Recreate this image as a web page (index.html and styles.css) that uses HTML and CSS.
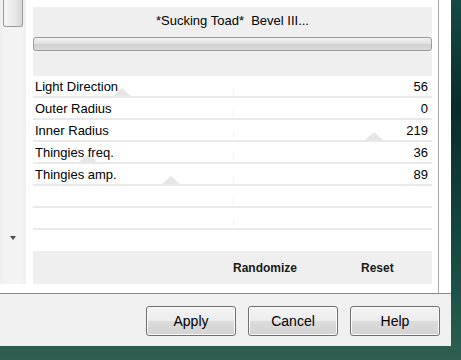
FILE: index.html
```html
<!doctype html>
<html lang="en">
    <head>
        <meta charset="UTF-8" />
        <title>Sucking Toad Bevel III</title>
        <link rel="stylesheet" href="styles.css">
    </head>
    <body>
        <div class="window">
            <div class="top">
                <div class="sidebar">
                    <div class="scroll-track">
                        <div class="scroll-thumb"></div>
                        <div class="scroll-arrow"></div>
                    </div>
                </div>

                <div class="pane">
                    <div class="main">
                        <div class="header">
                            <div class="title">*Sucking Toad*&nbsp; Bevel III...</div>
                            <div class="progress"></div>
                        </div>

                        <div class="params">
                            <div class="row">
                                <span class="thumb" style="left: 80px"></span>
                                <span class="label">Light Direction</span>
                                <span class="value">56</span>
                            </div>
                            <div class="row">
                                <span class="label">Outer Radius</span>
                                <span class="value">0</span>
                            </div>
                            <div class="row">
                                <span class="thumb" style="left: 332px"></span>
                                <span class="label">Inner Radius</span>
                                <span class="value">219</span>
                            </div>
                            <div class="row">
                                <span class="thumb" style="left: 46px"></span>
                                <span class="label">Thingies freq.</span>
                                <span class="value">36</span>
                            </div>
                            <div class="row">
                                <span class="thumb" style="left: 129px"></span>
                                <span class="label">Thingies amp.</span>
                                <span class="value">89</span>
                            </div>
                            <div class="row"></div>
                            <div class="row"></div>
                        </div>

                        <div class="actions">
                            <span class="action randomize">Randomize</span>
                            <span class="action reset">Reset</span>
                        </div>
                    </div>
                </div>
            </div>

            <div class="buttons">
                <button class="btn">Apply</button>
                <button class="btn">Cancel</button>
                <button class="btn">Help</button>
            </div>
        </div>
    </body>
</html>
```

FILE: styles.css
```css
:root {
    --panel-color: #efefef;
    --line-color: #e9e9e9;
    --text-color: #000000;
    --teal-dark: #0c3530;
    --teal-light: #2c5e52;
}

body {
    margin: 0;
    width: 461px;
    height: 360px;
    overflow: hidden;
    font-family: "Liberation Sans", Arial, sans-serif;
    color: var(--text-color);
    background:
        linear-gradient(180deg, #164a42 0%, #0a2c28 30%, #164a40 70%, #2e5f52 100%);
}

.window {
    width: 451px;
    background-color: #ffffff;
}

.top {
    display: flex;
    height: 293px;
    border-bottom: 1px solid #8a8a8a;
}

/* left scroll column */
.sidebar {
    width: 26px;
    height: 284px;
    background-color: #f0f0f0;
    flex-shrink: 0;
}

.scroll-track {
    position: relative;
    margin-left: 3px;
    width: 20px;
    height: 284px;
    background-color: #f3f3f3;
}

.scroll-thumb {
    height: 27px;
    box-sizing: border-box;
    border: 1px solid #9a9a9a;
    border-top: none;
    border-radius: 0 0 3px 3px;
    background: linear-gradient(90deg, #f6f6f6 0%, #e8e8e8 60%, #d6d6d6 100%);
}

.scroll-arrow {
    position: absolute;
    left: 7px;
    top: 236px;
    width: 0;
    height: 0;
    border-left: 3px solid transparent;
    border-right: 3px solid transparent;
    border-top: 4px solid #4a4a4a;
}

.pane {
    margin-left: 7px;
    width: 405px;
    border-right: 1px solid #a8a8a8;
}

.main {
    width: 399px;
}

/* title and progress */
.header {
    margin-top: 7px;
    height: 69px;
    background-color: var(--panel-color);
    display: flex;
    flex-direction: column;
}

.title {
    font-size: 13px;
    text-align: center;
    margin-top: 6px;
    height: 16px;
    line-height: 16px;
}

.progress {
    margin-top: 8px;
    height: 14px;
    box-sizing: border-box;
    border: 1px solid #9c9c9c;
    border-radius: 3px;
    background: linear-gradient(180deg, #f2f2f2 0%, #e2e2e2 45%, #cfcfcf 55%, #dcdcdc 100%);
}

/* parameter rows */
.params {
    display: flex;
    flex-direction: column;
}

.row {
    position: relative;
    height: 22px;
    box-sizing: border-box;
    border-bottom: 2px solid var(--line-color);
    display: flex;
    align-items: center;
    justify-content: space-between;
    padding: 0 4px 0 2px;
    font-size: 13px;
}

.row::after {
    content: "";
    position: absolute;
    left: 200px;
    bottom: 2px;
    width: 1px;
    height: 6px;
    background-color: #f0f0f0;
}

.label,
.value {
    position: relative;
    z-index: 1;
}

.thumb {
    position: absolute;
    bottom: 0;
    width: 0;
    height: 0;
    border-left: 9px solid transparent;
    border-right: 9px solid transparent;
    border-bottom: 8px solid #e6e6e6;
}

/* randomize / reset bar */
.actions {
    margin-top: 21px;
    height: 33px;
    background-color: var(--panel-color);
    display: flex;
    align-items: center;
    font-size: 12px;
    font-weight: 700;
    color: #1a1a1a;
}

.randomize {
    margin-left: 200px;
}

.reset {
    margin-left: 64px;
}

/* dialog buttons */
.buttons {
    height: 52px;
    background-color: #f0f0f0;
    display: flex;
    justify-content: flex-end;
    align-items: flex-start;
    gap: 12px;
    padding-right: 11px;
    padding-top: 12px;
    box-sizing: border-box;
}

.btn {
    width: 90px;
    height: 30px;
    font-family: "Liberation Sans", Arial, sans-serif;
    font-size: 14px;
    color: #000000;
    border: 1px solid #707070;
    border-radius: 3px;
    background: linear-gradient(180deg, #f4f4f4 0%, #ececec 48%, #dcdcdc 52%, #d2d2d2 100%);
    box-shadow: inset 0 0 0 1px #fbfbfb;
    padding: 0;
}
```
